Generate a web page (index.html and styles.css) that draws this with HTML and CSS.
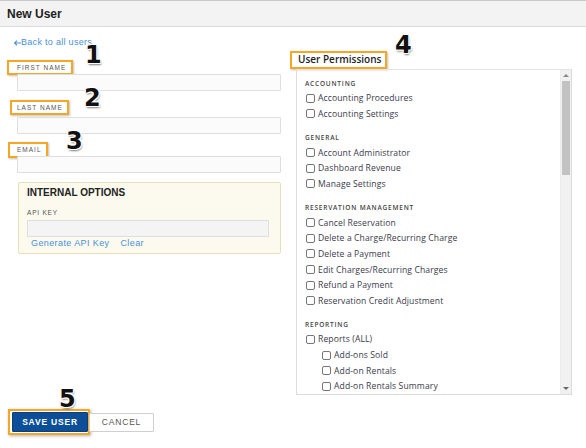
FILE: index.html
```html
<!DOCTYPE html>
<html>
<head>
<meta charset="utf-8">
<link rel="stylesheet" href="styles.css">
</head>
<body>
<div class="page">
  <header class="topbar"><h1>New User</h1></header>
  <main class="content">
    <section class="left">
      <a class="back" href="#"><svg class="back-arrow" width="7" height="6" viewBox="0 0 7 6"><path d="M0.5 3H7M3 0.6L0.6 3L3 5.4" fill="none" stroke="#4a90d9" stroke-width="1.1"/></svg>Back to all users</a>
      <div class="field f1">
        <span class="label hl hl-first">FIRST NAME</span>
        <div class="input"></div>
      </div>
      <div class="field f2">
        <span class="label hl hl-last">LAST NAME</span>
        <div class="input"></div>
      </div>
      <div class="field f3">
        <span class="label hl hl-email">EMAIL</span>
        <div class="input"></div>
      </div>
      <div class="internal">
        <h2>INTERNAL OPTIONS</h2>
        <div class="api-label">API KEY</div>
        <div class="input api-input"></div>
        <div class="links"><a href="#">Generate API Key</a><a href="#">Clear</a></div>
      </div>
    </section>
    <section class="right">
      <div class="perm-title hl">User Permissions</div>
      <div class="perm-box">
        <div class="perm-list">
          <div class="group">ACCOUNTING</div>
          <label class="item"><span class="cb"></span>Accounting Procedures</label>
          <label class="item"><span class="cb"></span>Accounting Settings</label>
          <div class="group">GENERAL</div>
          <label class="item"><span class="cb"></span>Account Administrator</label>
          <label class="item"><span class="cb"></span>Dashboard Revenue</label>
          <label class="item"><span class="cb"></span>Manage Settings</label>
          <div class="group">RESERVATION MANAGEMENT</div>
          <label class="item"><span class="cb"></span>Cancel Reservation</label>
          <label class="item"><span class="cb"></span>Delete a Charge/Recurring Charge</label>
          <label class="item"><span class="cb"></span>Delete a Payment</label>
          <label class="item"><span class="cb"></span>Edit Charges/Recurring Charges</label>
          <label class="item"><span class="cb"></span>Refund a Payment</label>
          <label class="item"><span class="cb"></span>Reservation Credit Adjustment</label>
          <div class="group">REPORTING</div>
          <label class="item"><span class="cb"></span>Reports (ALL)</label>
          <label class="item sub"><span class="cb"></span>Add-ons Sold</label>
          <label class="item sub"><span class="cb"></span>Add-on Rentals</label>
          <label class="item sub"><span class="cb"></span>Add-on Rentals Summary</label>
        </div>
        <div class="scrollbar">
          <span class="arrow up"></span>
          <span class="track"><span class="thumb"></span></span>
          <span class="arrow down"></span>
        </div>
      </div>
    </section>
  </main>
  <footer class="actions">
    <span class="save-wrap"><button class="btn save">SAVE USER</button></span>
    <button class="btn cancel">CANCEL</button>
  </footer>
  <span class="num n1">1</span>
  <span class="num n2">2</span>
  <span class="num n3">3</span>
  <span class="num n4">4</span>
  <span class="num n5">5</span>
</div>
</body>
</html>
```
FILE: styles.css
```css
* { box-sizing: border-box; }
html, body { margin: 0; padding: 0; background: #fff; }
body { font-family: "Liberation Sans", Arial, sans-serif; color: #333; }
.page { position: relative; width: 586px; height: 448px; overflow: hidden; }

.topbar {
  height: 27px;
  background: #f3f3f3;
  border-top: 1px solid #c8c8c8;
  border-bottom: 1px solid #dcdcdc;
  display: flex; align-items: center;
  padding-left: 7px;
}
.topbar h1 { margin: 0; font-size: 12px; font-weight: bold; color: #222; }

.content { display: flex; gap: 15px; padding-left: 17px; height: 367px; }
.left { width: 264px; display: flex; flex-direction: column; }
.back {
  display: flex; align-items: center;
  font-size: 9px; color: #4a90d9; text-decoration: none;
  margin: 10px 0 0 -3px; letter-spacing: 0.3px; line-height: 11px;
  align-self: flex-start;
}

.field { display: flex; flex-direction: column; }
.label {
  font-size: 6.5px; letter-spacing: 1px; color: #555; line-height: 9px;
  align-self: flex-start;
}
.hl {
  border: 2px solid #f5a623;
  box-shadow: 1px 1px 2px rgba(0,0,0,0.25);
}
.hl-first { margin: 12px 0 -1px -10px; padding: 1px 5px 1px 8px; }
.hl-last { margin: 9px 0 2px -7px; padding: 1px 4px 1px 5px; }
.hl-email { margin: 8px 0 -2px -9px; padding: 1px 4px 2px 7px; }
.input {
  height: 17px; border: 1px solid #dedede; background: #fbfbfb; border-radius: 1px;
}

.internal {
  margin-top: 9px; margin-left: 1px;
  height: 72px;
  background: #fcfaee;
  border: 1px solid #e6e0b8;
  border-radius: 2px;
  padding: 3px 11px 0 8px;
}
.internal h2 { margin: 0; font-size: 10px; font-weight: bold; color: #222; line-height: 13px; }
.api-label { font-size: 6.5px; letter-spacing: 0.8px; color: #555; margin-top: 10px; line-height: 8px; }
.api-input { margin-top: 3px; background: #f4f4f4; }
.links { display: flex; gap: 11px; padding-left: 4px; margin-top: 1px; }
.links a { font-size: 9px; color: #4a90d9; text-decoration: none; letter-spacing: 0.4px; line-height: 11px; }

.right { width: 276px; display: flex; flex-direction: column; }
.perm-title {
  align-self: flex-start;
  margin: 24px 0 0 -6px;
  font-family: "Open Sans", sans-serif; font-weight: 600;
  font-size: 10px; line-height: 13px; color: #222;
  padding: 0 4px 1px 6px;
}
.perm-box {
  height: 327px;
  border: 1px solid #dcdcdc; border-top-color: #e4e4e4;
  display: flex;
}
.perm-list {
  flex: 1; overflow: hidden;
  font-family: "Open Sans", sans-serif;
  padding: 7px 0 0 8px;
}
.group {
  font-size: 6.5px; font-weight: 600; letter-spacing: 0.8px; color: #444;
  line-height: 9px; margin-top: 11.6px; margin-bottom: 2.6px;
}
.group:first-child { margin-top: 2px; }
.item {
  display: flex; align-items: center; gap: 3px;
  font-size: 8.6px; color: #3a3a4a; height: 15.6px; letter-spacing: 0.1px;
}
.item.sub { padding-left: 16px; }
.cb {
  width: 9px; height: 9px; border: 1px solid #777; border-radius: 2px; background: #fff;
  flex: none; margin-left: 1px;
}
.scrollbar {
  width: 11px; background: #f1f1f1; border-left: 1px solid #ececec;
  display: flex; flex-direction: column; align-items: center;
}
.arrow { width: 0; height: 0; border-left: 3px solid transparent; border-right: 3px solid transparent; margin: 4px 0; }
.arrow.up { border-bottom: 3px solid #888; }
.arrow.down { border-top: 3px solid #666; }
.track { flex: 1; width: 100%; padding: 0 1px; }
.thumb { display: block; height: 94px; background: #c2c2c2; }

.actions { display: flex; align-items: center; padding: 15px 0 0 8px; }
.save-wrap {
  border: 2px solid #f5a623; padding: 1px 0 1px 2px;
  box-shadow: 1px 1px 3px rgba(0,0,0,0.3);
  display: flex;
}
.btn {
  font-family: "Liberation Sans", Arial, sans-serif;
  font-size: 8.5px; font-weight: bold; letter-spacing: 0.8px;
  border-radius: 1px; cursor: pointer;
}
.save { width: 76px; height: 20px; background: #0c4f98; color: #fff; border: 1px solid #0a3f7a; padding: 0; }
.cancel {
  width: 65px; height: 19px; background: #fff; color: #555; border: 1px solid #cfcfcf;
  font-weight: normal; margin-left: -1px;
}

.num {
  position: absolute;
  font-family: "DejaVu Sans", sans-serif; font-weight: bold;
  font-size: 24px; line-height: 24px; color: #111;
  text-shadow: -1px -1px 0 #fff, 1px -1px 0 #fff, -1px 1px 0 #fff, 1px 1px 0 #fff, 1px 2px 2px rgba(0,0,0,0.5);
}
.n1 { left: 85px; top: 43px; }
.n2 { left: 84px; top: 86px; }
.n3 { left: 66px; top: 129px; }
.n4 { left: 395px; top: 33px; }
.n5 { left: 59px; top: 387px; }
```
